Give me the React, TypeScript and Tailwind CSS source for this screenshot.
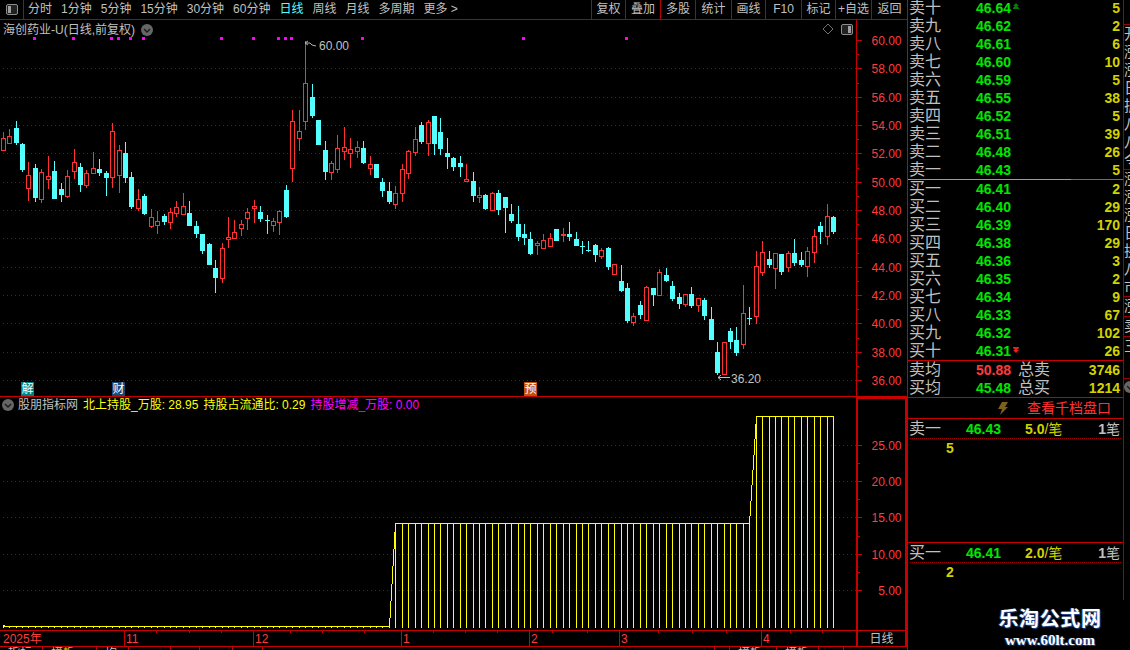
import React from "react";

// --- Data ---
// candles in 3x zoom coordinates: [x, high, low, top, bottom, up]
type Candle = [number, number, number, number, number, number];

const firstCandles: Candle[] = [
  [10, 397, 452, 415, 450, 1], [28, 388, 432, 408, 430, 1], [49, 363, 435, 384, 429, 0], [67, 430, 515, 433, 510, 0],
  [85, 487, 602, 526, 563, 1], [106, 492, 605, 504, 594, 0], [124, 507, 608, 517, 596, 1], [145, 468, 568, 529, 536, 1],
  [163, 483, 598, 513, 596, 0], [184, 548, 605, 567, 584, 0], [202, 510, 593, 529, 587, 1], [223, 447, 537, 487, 512, 1],
  [241, 490, 575, 501, 555, 0], [259, 510, 563, 520, 554, 1], [280, 457, 521, 505, 520, 1], [298, 477, 527, 507, 519, 0],
  [319, 514, 587, 519, 534, 0], [337, 369, 563, 394, 532, 1], [358, 435, 578, 451, 526, 1], [376, 427, 548, 459, 533, 0],
  [394, 516, 628, 531, 621, 0], [415, 568, 632, 598, 623, 1], [433, 582, 644, 588, 641, 0], [454, 627, 683, 652, 677, 1],
  [472, 632, 701, 664, 674, 1], [493, 642, 675, 648, 666, 0], [511, 625, 687, 637, 667, 1], [529, 603, 651, 622, 638, 1],
  [550, 579, 642, 618, 641, 1], [568, 603, 677, 639, 677, 0], [589, 663, 713, 678, 702, 0], [607, 702, 761, 702, 753, 0],
  [628, 729, 795, 732, 795, 0], [646, 780, 878, 804, 833, 0], [667, 729, 848, 745, 833, 1], [685, 652, 743, 712, 718, 1],
  [703, 660, 715, 697, 714, 1], [724, 660, 708, 673, 683, 1], [742, 623, 690, 637, 653, 1], [763, 600, 669, 619, 625, 1],
  [781, 618, 666, 636, 657, 0], [802, 645, 702, 660, 662, 0], [820, 654, 696, 664, 674, 1], [838, 630, 705, 633, 665, 1],
  [859, 555, 653, 570, 651, 0], [877, 330, 546, 364, 505, 1], [898, 330, 452, 394, 415, 1], [916, 122, 390, 250, 364, 1],
  [937, 252, 353, 291, 348, 0], [955, 360, 435, 360, 435, 0], [976, 423, 540, 450, 515, 0], [994, 483, 540, 490, 517, 1],
  [1012, 405, 518, 445, 508, 1], [1033, 381, 480, 442, 452, 1], [1051, 414, 504, 448, 458, 1], [1072, 423, 474, 442, 452, 1],
  [1090, 423, 492, 444, 489, 0], [1111, 469, 525, 493, 505, 1], [1129, 492, 534, 492, 534, 0], [1147, 534, 590, 546, 573, 0],
  [1168, 546, 612, 573, 606, 0], [1186, 558, 627, 580, 611, 1], [1207, 492, 606, 508, 580, 1], [1225, 450, 538, 454, 518, 1],
  [1246, 381, 468, 418, 455, 1], [1264, 366, 432, 376, 426, 0], [1285, 360, 468, 367, 429, 1], [1303, 348, 465, 348, 432, 0],
  [1321, 354, 465, 396, 447, 0], [1342, 414, 507, 459, 471, 0], [1360, 470, 513, 474, 501, 0], [1381, 468, 531, 489, 501, 0],
  [1399, 492, 546, 538, 544, 1], [1420, 516, 606, 543, 588, 0], [1438, 561, 609, 585, 591, 1], [1456, 582, 630, 585, 627, 0],
  [1477, 576, 630, 579, 629, 1], [1495, 570, 645, 579, 630, 0], [1516, 591, 699, 591, 624, 0],
];

// same coordinates, offset by x 1350 and y 600
const secondCandles: Candle[] = [
  [184, 12, 69, 42, 63, 0], [205, 18, 123, 72, 111, 0], [223, 72, 135, 102, 114, 0], [241, 96, 165, 117, 162, 0],
  [262, 123, 165, 129, 134, 1], [280, 102, 144, 121, 143, 1], [301, 99, 138, 115, 137, 1], [319, 87, 123, 87, 123, 0],
  [340, 84, 126, 102, 105, 1], [358, 66, 123, 102, 111, 0], [379, 96, 138, 117, 138, 0], [397, 123, 162, 138, 141, 0],
  [415, 123, 156, 150, 153, 0], [436, 132, 186, 135, 165, 0], [454, 144, 177, 151, 167, 1], [475, 141, 210, 144, 201, 0],
  [493, 192, 222, 192, 221, 1], [514, 195, 276, 243, 273, 0], [532, 249, 369, 264, 363, 0], [550, 339, 378, 349, 365, 1],
  [571, 303, 357, 315, 345, 0], [589, 258, 360, 261, 359, 1], [610, 264, 318, 264, 285, 0], [628, 207, 285, 217, 285, 1],
  [649, 204, 246, 225, 243, 0], [667, 243, 303, 258, 297, 0], [688, 279, 327, 291, 312, 0], [706, 282, 321, 283, 312, 1],
  [724, 261, 324, 282, 318, 0], [745, 294, 336, 295, 315, 1], [763, 294, 360, 300, 348, 0], [784, 321, 420, 357, 420, 0],
  [802, 426, 525, 456, 519, 0], [823, 426, 522, 427, 521, 1], [841, 384, 447, 393, 426, 0], [859, 381, 468, 420, 459, 0],
  [880, 255, 447, 340, 431, 1], [898, 321, 375, 354, 357, 0], [919, 153, 372, 199, 347, 1], [937, 123, 228, 157, 215, 1],
  [958, 153, 204, 177, 195, 0], [976, 159, 267, 160, 203, 1], [994, 162, 225, 162, 216, 0], [1015, 153, 216, 160, 200, 1],
  [1033, 117, 198, 159, 189, 0], [1054, 156, 201, 180, 195, 0], [1072, 141, 231, 153, 197, 1], [1093, 87, 189, 109, 155, 1],
  [1111, 66, 132, 78, 96, 0], [1132, 12, 135, 49, 107, 1], [1150, 48, 102, 51, 96, 0],
];

const candles: Candle[] = [
  ...firstCandles,
  ...secondCandles.map(([x, h, l, t, b, u]): Candle => [x + 1350, h + 600, l + 600, t + 600, b + 600, u]),
];

const magentaDots = [103, 220, 334, 355, 391, 430, 664, 760, 835, 856, 874, 1087, 1570, 1879];

const priceTicks = [
  { label: "60.00", y: 40 }, { label: "58.00", y: 68 }, { label: "56.00", y: 97 }, { label: "54.00", y: 125 },
  { label: "52.00", y: 153 }, { label: "50.00", y: 182 }, { label: "48.00", y: 210 }, { label: "46.00", y: 238 },
  { label: "44.00", y: 267 }, { label: "42.00", y: 295 }, { label: "40.00", y: 323 }, { label: "38.00", y: 352 },
  { label: "36.00", y: 380 },
];

const volumeTicks = [
  { label: "25.00", y: 445 }, { label: "20.00", y: 481 }, { label: "15.00", y: 517 }, { label: "10.00", y: 554 }, { label: "5.00", y: 590 },
];

const leftTabs = ["分时", "1分钟", "5分钟", "15分钟", "30分钟", "60分钟", "日线", "周线", "月线", "多周期", "更多 >"];

const rightTabs = [
  { label: "复权", width: "w-[34px]" }, { label: "叠加", width: "w-[35px]" }, { label: "多股", width: "w-[35px]" },
  { label: "统计", width: "w-[36px]" }, { label: "画线", width: "w-[34px]" }, { label: "F10", width: "w-[36px]" },
  { label: "标记", width: "w-[34px]" }, { label: "+自选", width: "w-[36px]" }, { label: "返回", width: "w-[36px]" },
];

const sellRows = [
  ["卖十", "46.64", "5"], ["卖九", "46.62", "2"], ["卖八", "46.61", "6"], ["卖七", "46.60", "10"], ["卖六", "46.59", "5"],
  ["卖五", "46.55", "38"], ["卖四", "46.52", "5"], ["卖三", "46.51", "39"], ["卖二", "46.48", "26"], ["卖一", "46.43", "5"],
];

const buyRows = [
  ["买一", "46.41", "2"], ["买二", "46.40", "29"], ["买三", "46.39", "170"], ["买四", "46.38", "29"], ["买五", "46.36", "3"],
  ["买六", "46.35", "2"], ["买七", "46.34", "9"], ["买八", "46.33", "67"], ["买九", "46.32", "102"], ["买十", "46.31", "26"],
];

const monthMarks = [
  { label: "11", x: 124 }, { label: "12", x: 253 }, { label: "1", x: 401 }, { label: "2", x: 529 }, { label: "3", x: 619 }, { label: "4", x: 761 },
];
const weekTicks = [156, 189, 221, 290, 322, 364, 433, 465, 497, 552, 587, 658, 692, 726, 790, 822];

const bottomCells = [
  { text: "指标", width: "w-[43px]", color: "text-[#c0c0c0]" }, { text: "模板", width: "w-[54px]", color: "text-[#d2d200]" },
  { text: "均线", width: "w-[32px]", color: "text-[#c0c0c0]" }, { text: "", width: "w-[42px]", color: "text-[#c0c0c0]" },
  { text: "", width: "w-[29px]", color: "text-[#c0c0c0]" }, { text: "", width: "w-[33px]", color: "text-[#c0c0c0]" },
  { text: "", width: "w-[30px]", color: "text-[#c0c0c0]" }, { text: "", width: "w-[452px]", color: "text-[#c0c0c0]" },
  { text: "", width: "w-[15px]", color: "text-[#c0c0c0]" }, { text: "模板", width: "w-[47px]", color: "text-[#c0c0c0]" },
  { text: "模板", width: "w-[42px]", color: "text-[#c0c0c0]" }, { text: "", width: "w-[25px]", color: "text-[#c0c0c0]" },
];

const edgeRows = ["开", "涨", "涨", "日", "振", "八", "八", "令"];
const edgeRowsLower = ["涨", "涨", "涨", "日", "换", "八", "市"];

// --- Small drawings ---
const ChevronDot = () => (
  <svg width="12" height="12" viewBox="0 0 12 12" className="shrink-0">
    <circle cx="6" cy="6" r="6" fill="#666666" />
    <path d="M3 5 L6 8 L9 5" fill="none" stroke="#1a1a1a" strokeWidth="1.4" />
  </svg>
);

const PanelIcon = ({ flip }: { flip?: boolean }) => (
  <svg width="12" height="11" viewBox="0 0 12 11">
    <rect x="0.5" y="0.5" width="11" height="10" rx="1.5" fill="#222222" stroke="#8c8c8c" />
    <rect x={flip ? 7 : 2} y="2" width="3" height="7" fill="#a0a0a0" />
  </svg>
);

const DottedLine = ({ y }: { y: number }) => (
  <line x1="3" x2="856" y1={y + 0.5} y2={y + 0.5} stroke="#a00000" strokeDasharray="1 3" />
);

// --- Chart panels ---
const CandleChart = () => (
  <svg width="856" height="376" viewBox="0 20 856 376" className="block">
    <g shapeRendering="crispEdges">
      {priceTicks.slice(1).map((t) => (
        <DottedLine key={t.label} y={t.y} />
      ))}
      {magentaDots.map((x) => (
        <rect key={x} x={Math.floor(x / 3) - 1} y="37" width="3" height="3" fill="#ff00ff" />
      ))}
      {candles.map(([x, hi, lo, top, bot, up]) => {
        const c = Math.floor(x / 3);
        const yHi = Math.round(hi / 3);
        const yLo = Math.round(lo / 3);
        const yTop = Math.round(top / 3);
        const yBot = Math.round(bot / 3);
        const color = up ? "#ff3232" : "#54ffff";
        return (
          <g key={x}>
            <rect x={c} y={yHi} width="1" height={yLo - yHi} fill={color} />
            {up ? (
              <rect x={c - 1.5} y={yTop + 0.5} width="4" height={Math.max(yBot - yTop, 1)} fill="#000000" stroke={color} />
            ) : (
              <rect x={c - 2} y={yTop} width="5" height={Math.max(yBot - yTop, 1)} fill={color} />
            )}
          </g>
        );
      })}
    </g>
    {/* high and low notes */}
    <path d="M305 43 L308 41 M305 43 L308 45 M305 43 L310 43 L312 45 L316 46" fill="none" stroke="#b4b4b4" />
    <text x="319" y="50" fontSize="12" fill="#c0c0c0">60.00</text>
    <path d="M718 377.5 L730 377.5 M718 377.5 L721 375 M718 377.5 L721 380" fill="none" stroke="#c0c0c0" />
    <text x="731" y="383" fontSize="12" fill="#c0c0c0">36.20</text>
  </svg>
);

const VolumeChart = () => {
  const lower = candles.slice(61, 117);
  const upper = candles.slice(117, 130);
  const lowerSteps: [number, number, number][] = [
    [389, 618, 628], [390, 601, 618], [391, 584, 601], [392, 566, 584], [393, 549, 566], [394, 532, 549],
  ];
  const upperSteps: [number, number, number][] = [
    [749, 516, 523], [750, 501, 516], [751, 485, 501], [752, 470, 485], [753, 455, 470], [754, 439, 455], [755, 424, 439],
  ];
  return (
    <svg width="856" height="233" viewBox="0 397 856 233" className="block">
      <g shapeRendering="crispEdges">
        {volumeTicks.map((t) => (
          <DottedLine key={t.label} y={t.y} />
        ))}
        <g fill="#ffff00">
          {/* flat start */}
          <rect x="3" y="625" width="2" height="2" />
          <rect x="3" y="626" width="387" height="1" />
          {candles.slice(0, 61).map(([x]) => (
            <rect key={x} x={Math.floor(x / 3)} y="627" width="1" height="1" />
          ))}
          {[...lowerSteps, ...upperSteps].map(([x, a, b]) => (
            <rect key={x} x={x} y={a} width="1" height={b - a} />
          ))}
          {lower.map(([x]) => (
            <rect key={x} x={Math.floor(x / 3)} y="523" width="1" height="105" />
          ))}
          {upper.map(([x]) => (
            <rect key={x} x={Math.floor(x / 3)} y="416" width="1" height="212" />
          ))}
          <rect x="395" y="523" width="355" height="1" />
          <rect x="756" y="416" width="78" height="1" />
        </g>
      </g>
    </svg>
  );
};

const TimeAxis = () => (
  <div className="h-[15px] w-[856px] shrink-0">
    <svg width="856" height="15" className="block">
      <g shapeRendering="crispEdges" stroke="#c80000">
        {weekTicks.map((x) => (
          <line key={x} x1={x + 0.5} x2={x + 0.5} y1="0" y2="2" />
        ))}
        {monthMarks.map((m) => (
          <line key={m.label} x1={m.x + 0.5} x2={m.x + 0.5} y1="0" y2="15" />
        ))}
      </g>
      <text x="3" y="12" fontSize="12" fill="#ff3c3c">2025年</text>
      {monthMarks.map((m) => (
        <text key={m.label} x={m.x + 2} y="12" fontSize="12" fill="#ff3c3c">
          {m.label}
        </text>
      ))}
    </svg>
  </div>
);

// --- Order book ---
const QuoteRow = ({ row, marker }: { row: string[]; marker?: "up" | "down" }) => (
  <div className="relative grid h-[18px] grid-cols-[67px_1fr_auto] items-center pr-[3px] pl-[1px]">
    <span className="text-[16px] leading-[18px] text-[#c0c0c0]">{row[0]}</span>
    <span className="text-[14px] leading-[18px] font-bold text-[#00e600]">{row[1]}</span>
    <span className="text-[14px] leading-[18px] font-bold text-[#d2d200]">{row[2]}</span>
    {marker && (
      <svg width="6" height="7" viewBox="0 0 6 7" className="absolute top-[4px] left-[105px]">
        <path
          d={marker === "up" ? "M3 0 L6 3 L4 3 L6 5 L6 6 L0 6 L0 5 L2 3 L0 3 Z" : "M3 7 L0 4 L2 4 L0 2 L0 1 L6 1 L6 2 L4 4 L6 4 Z"}
          fill={marker === "up" ? "#0a7a0a" : "#e62020"}
        />
      </svg>
    )}
  </div>
);

const AverageRow = ({ a, price, priceColor, b, qty }: { a: string; price: string; priceColor: string; b: string; qty: string }) => (
  <div className="grid h-[18px] grid-cols-[67px_42px_1fr_auto] items-center pr-[3px] pl-[1px]">
    <span className="text-[16px] leading-[18px] text-[#c0c0c0]">{a}</span>
    <span className={`text-[14px] leading-[18px] font-bold ${priceColor}`}>{price}</span>
    <span className="text-[16px] leading-[18px] text-[#c0c0c0]">{b}</span>
    <span className="text-[14px] leading-[18px] font-bold text-[#d2d200]">{qty}</span>
  </div>
);

const TradeBlock = ({ label, price, volume, count, tall }: { label: string; price: string; volume: string; count: string; tall: string }) => (
  <div className={`${tall} shrink-0`}>
    <div className="flex h-[19px] items-center pr-[3px] pl-[1px]">
      <span className="w-[57px] text-[16px] leading-[18px] text-[#c0c0c0]">{label}</span>
      <span className="w-[59px] text-[14px] leading-[18px] font-bold text-[#00e600]">{price}</span>
      <span className="flex-1 text-[14px] leading-[18px] text-[#d2d200]">
        <b>{volume}</b>/笔
      </span>
      <span className="text-[14px] leading-[18px] text-[#c0c0c0]">
        <b>{count}</b>笔
      </span>
    </div>
    <div className="mx-[2px] border-t border-dotted border-[#a00000]" />
    <div className="pl-[38px] text-[14px] leading-[18px] font-bold text-[#d2d200]">{volume.split(".")[0]}</div>
  </div>
);

const OrderBook = () => (
  <div className="flex h-[650px] w-[217px] shrink-0 flex-col border-l border-[#c80000]">
    <div className="flex h-[600px] flex-col overflow-hidden border-r border-[#a00000]">
      <div className="-mt-px">
        {sellRows.map((row, i) => (
          <QuoteRow key={row[0]} row={row} marker={i === 0 ? "up" : undefined} />
        ))}
      </div>
      <div className="flex h-px shrink-0">
        <div className="w-[163px] bg-[#c8963c]" />
        <div className="flex-1 bg-[#3c78b4]" />
      </div>
      {buyRows.map((row, i) => (
        <QuoteRow key={row[0]} row={row} marker={i === 9 ? "down" : undefined} />
      ))}
      <div className="mt-0 shrink-0 border-t border-[#c80000]">
        <AverageRow a="卖均" price="50.88" priceColor="text-[#ff3c3c]" b="总卖" qty="3746" />
        <AverageRow a="买均" price="45.48" priceColor="text-[#00e600]" b="总买" qty="1214" />
      </div>
      <div className="flex h-[22px] shrink-0 items-center border-t border-b border-[#c80000] pl-[89px]">
        <svg width="11" height="13" viewBox="0 0 11 13">
          <path d="M5 0 L11 0 L8 5 L11 5 L3 13 L5 7 L1 7 Z" fill="#7d5f1e" />
        </svg>
        <span className="ml-[19px] text-[14px] leading-[18px] text-[#ff3232]">查看千档盘口</span>
      </div>
      <TradeBlock label="卖一" price="46.43" volume="5.0" count="1" tall="h-[123px]" />
      <div className="shrink-0 border-t border-[#c80000]">
        <TradeBlock label="买一" price="46.41" volume="2.0" count="1" tall="h-[57px]" />
      </div>
    </div>
  </div>
);

const EdgeColumn = () => (
  <div className="flex h-[650px] w-[6px] shrink-0 flex-col overflow-hidden text-[15px] leading-[18px] text-[#c0c0c0]">
    <div className="h-[25px] shrink-0 border-b border-[#a00000]" />
    {edgeRows.map((t, i) => (
      <div key={i} className="h-[18px] shrink-0 whitespace-nowrap">{t}</div>
    ))}
    <div className="h-[127px] shrink-0 border-t border-[#a00000]">
      {edgeRowsLower.map((t, i) => (
        <div key={i} className="h-[18px] whitespace-nowrap">{t}</div>
      ))}
    </div>
    <div className="h-[20px] shrink-0 whitespace-nowrap border-t border-[#a00000]">涨</div>
    <div className="h-[20px] shrink-0 whitespace-nowrap border-t border-[#a00000]">卖</div>
    <div className="h-[42px] shrink-0 whitespace-nowrap border-t border-[#a00000]">三</div>
    <div className="h-[18px] shrink-0 border-t border-[#a00000] pt-[2px]">
      <ChevronDot />
    </div>
  </div>
);

// --- Page ---
export default function App() {
  return (
    <div className="relative flex h-[650px] w-[1130px] overflow-hidden bg-black font-['Liberation_Sans','Noto_Sans_CJK_SC',sans-serif] text-[12px] text-[#c0c0c0]">
      {/* left side: toolbar, charts, axis */}
      <div className="flex w-[907px] shrink-0 flex-col">
        <div className="flex h-[20px] shrink-0 items-center border-b border-[#b40000] leading-[19px]">
          <div className="flex h-[19px] w-[24px] shrink-0 items-center justify-center border-r border-[#b40000]">
            <PanelIcon />
          </div>
          <div className="flex flex-1 gap-[9px] pl-[4px]">
            {leftTabs.map((t) => (
              <span key={t} className={t === "日线" ? "text-[#54ffff]" : ""}>
                {t}
              </span>
            ))}
          </div>
          {rightTabs.map((t) => (
            <span key={t.label} className={`${t.width} h-[19px] shrink-0 border-l border-[#b40000] text-center`}>
              {t.label}
            </span>
          ))}
        </div>

        {/* price panel */}
        <div className="flex h-[377px] shrink-0 border-b border-[#c80000]">
          <div className="relative w-[856px] shrink-0">
            <CandleChart />
            <div className="absolute top-[3px] left-[3px] flex items-center gap-[6px] leading-[14px]">
              <span>海创药业-U(日线,前复权)</span>
              <ChevronDot />
            </div>
            <svg width="12" height="12" viewBox="0 0 12 12" className="absolute top-[3px] left-[822px]">
              <path d="M6 1 L11 6 L6 11 L1 6 Z" fill="none" stroke="#707070" />
            </svg>
            <div className="absolute top-[4px] left-[841px]">
              <PanelIcon flip />
            </div>
            <span className="absolute top-[362px] left-[21px] h-[14px] w-[13px] bg-[#008080] text-center leading-[14px] text-white">解</span>
            <span className="absolute top-[362px] left-[112px] h-[14px] w-[13px] bg-[#164a78] text-center leading-[14px] text-white">财</span>
            <span className="absolute top-[362px] left-[524px] h-[14px] w-[13px] bg-[#c05010] text-center leading-[14px] text-white">预</span>
          </div>
          <div className="h-full shrink-0 border-l border-[#c80000]">
            <svg width="50" height="376" viewBox="857 20 50 376" className="block">
              <g shapeRendering="crispEdges" stroke="#c80000">
                {priceTicks.map((t) => (
                  <line key={t.label} x1="857" x2="862" y1={t.y + 0.5} y2={t.y + 0.5} />
                ))}
                {priceTicks.slice(1).map((t) => (
                  <line key={t.y} x1="857" x2="859" y1={t.y - 14 + 0.5} y2={t.y - 14 + 0.5} />
                ))}
              </g>
              {priceTicks.map((t) => (
                <text key={t.label} x="901.5" y={t.y + 5} textAnchor="end" fontSize="12" fill="#ff3c3c">
                  {t.label}
                </text>
              ))}
            </svg>
          </div>
        </div>

        {/* indicator panel */}
        <div className="flex h-[233px] shrink-0">
          <div className="relative w-[856px] shrink-0">
            <VolumeChart />
            <div className="absolute top-[1px] left-[2px] flex items-center whitespace-pre leading-[14px]">
              <ChevronDot />
              <span className="ml-[4px]">股朋指标网</span>
              <span className="ml-[5px] text-[#ffff00]">北上持股_万股: 28.95</span>
              <span className="ml-[5px] text-[#ffff00]">持股占流通比: 0.29</span>
              <span className="ml-[5px] text-[#ff00ff]">持股增减_万股: 0.00</span>
            </div>
          </div>
          <div className="h-full shrink-0 border-x-2 border-t-2 border-[#c80000]">
            <svg width="47" height="231" viewBox="858 399 47 231" className="block">
              <g shapeRendering="crispEdges" stroke="#c80000">
                {volumeTicks.map((t) => (
                  <line key={t.label} x1="858" x2="862" y1={t.y + 0.5} y2={t.y + 0.5} />
                ))}
                {[463, 499, 536, 572].map((y) => (
                  <line key={y} x1="858" x2="860" y1={y + 0.5} y2={y + 0.5} />
                ))}
              </g>
              {volumeTicks.map((t) => (
                <text key={t.label} x="901.5" y={t.y + 5} textAnchor="end" fontSize="12" fill="#ff3c3c">
                  {t.label}
                </text>
              ))}
            </svg>
          </div>
        </div>

        {/* time axis */}
        <div className="flex h-[17px] shrink-0 border-y border-[#c80000]">
          <TimeAxis />
          <div className="-mt-px flex h-[17px] flex-1 items-center justify-center border-x-2 border-[#c80000] text-[12px]">日线</div>
        </div>

        {/* tab row, cut by the window edge */}
        <div className="flex h-[3px] overflow-hidden leading-[12px]">
          {bottomCells.map((c, i) => (
            <div key={i} className={`${c.width} ${c.color} h-[3px] shrink-0 border-r border-[#c80000] pl-[8px]`}>
              {c.text}
            </div>
          ))}
        </div>
      </div>

      <OrderBook />
      <EdgeColumn />

      {/* watermark */}
      <div className="absolute top-[606px] left-[998px] flex w-[104px] flex-col items-center font-['Liberation_Serif','Noto_Sans_CJK_SC',serif] font-bold text-white [text-shadow:1px_1px_1px_#1e4a96,-1px_0_1px_#1e4a96]">
        <span className="text-[20px] leading-[26px] tracking-[0.6px]">乐淘公式网</span>
        <span className="text-[15px] leading-[17px]">www.60lt.com</span>
      </div>
    </div>
  );
}
